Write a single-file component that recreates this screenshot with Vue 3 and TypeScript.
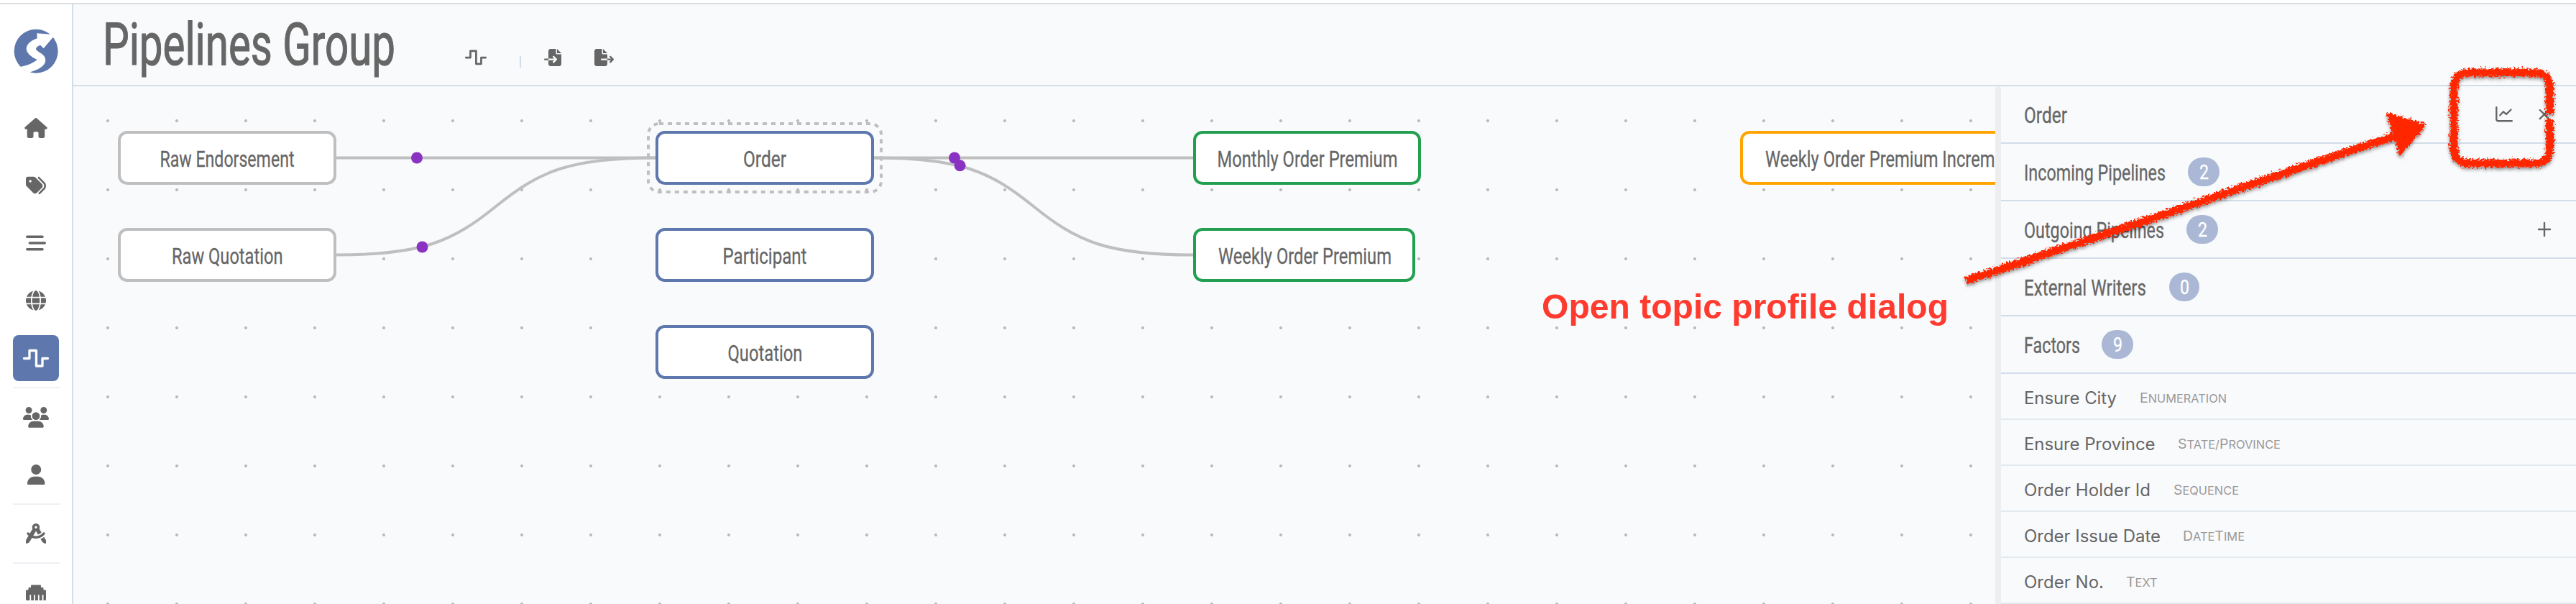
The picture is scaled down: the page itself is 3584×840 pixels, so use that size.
<script setup lang="ts">
interface NavItem {
  id: string
  viewBox: string
  width: number
  height: number
  path: string
  active?: boolean
  divider?: boolean
}

interface TopicNode {
  name: string
  kind: 'raw' | 'distinct' | 'aggregate' | 'time'
  x: number
  y: number
  width: number
  textX: number
  textWidth: number
}

interface Section {
  name: string
  width: number
  gap: number
  count?: number
  badge?: number
  tools?: 'topic' | 'add'
}

interface Factor {
  name: string
  width: number
  gap: number
  type: [string, boolean][]
  typeWidth: number
}

const pulsePath = 'M1.5 12.5H9V1.5H18.5V23H27V12.5H34.5'

const navItems: NavItem[] = [
  { id: 'home', viewBox: '0 0 576 512', width: 32, height: 28, path: 'M575.8 255.5c0 18-15 32.1-32 32.1h-32l.7 160.2c0 2.7-.2 5.4-.5 8.1V472c0 22.1-17.9 40-40 40H456c-1.1 0-2.2 0-3.3-.1c-1.4 .1-2.8 .1-4.2 .1H416 392c-22.1 0-40-17.9-40-40V448 384c0-17.7-14.3-32-32-32H256c-17.7 0-32 14.3-32 32v64 24c0 22.1-17.9 40-40 40H160 128.1c-1.5 0-3-.1-4.5-.2c-1.2 .1-2.4 .2-3.6 .2H104c-22.1 0-40-17.9-40-40V360c0-.9 0-1.9 .1-2.8V287.6H32c-18 0-32-14-32-32.1c0-9 3-17 10-24L266.4 8c7-7 15-8 22-8s15 2 21 7L564.8 231.5c8 7 12 15 11 24z' },
  { id: 'tags', viewBox: '0 0 512 512', width: 28, height: 28, path: 'M345 39.1L472.8 168.4c52.4 53 52.4 138.2 0 191.2L360.8 472.9c-9.3 9.4-24.5 9.5-33.9 .2s-9.5-24.5-.2-33.9L438.6 325.9c33.9-34.3 33.9-89.4 0-123.7L310.9 72.9c-9.3-9.4-9.2-24.6 .2-33.9s24.6-9.2 33.9 .2zM0 229.5V80C0 53.5 21.5 32 48 32H197.5c17 0 33.3 6.7 45.3 18.7l168 168c25 25 25 65.5 0 90.5L277.3 442.7c-25 25-65.5 25-90.5 0l-168-168C6.7 262.7 0 246.5 0 229.5zM144 144a32 32 0 1 0 -64 0 32 32 0 1 0 64 0z' },
  { id: 'list', viewBox: '0 0 28 28', width: 28, height: 28, path: 'M1.8 3.4H23a1.8 1.8 0 0 1 0 3.6H1.8a1.8 1.8 0 0 1 0-3.6ZM5.4 12.2H26.2a1.8 1.8 0 0 1 0 3.6H5.4a1.8 1.8 0 0 1 0-3.6ZM1.8 21H23a1.8 1.8 0 0 1 0 3.6H1.8a1.8 1.8 0 0 1 0-3.6Z' },
  { id: 'globe', viewBox: '0 0 512 512', width: 28, height: 28, path: 'M352 256c0 22.2-1.2 43.6-3.3 64H163.3c-2.2-20.4-3.3-41.8-3.3-64s1.2-43.6 3.3-64H348.7c2.2 20.4 3.3 41.8 3.3 64zm28.8-64H503.9c5.3 20.5 8.1 41.9 8.1 64s-2.8 43.5-8.1 64H380.8c2.1-20.6 3.2-42 3.2-64s-1.1-43.4-3.2-64zm112.6-32H376.7c-10-63.9-29.8-117.4-55.3-151.6c78.3 20.7 142 77.5 171.9 151.6zm-149.1 0H167.7c6.1-36.4 15.5-68.6 27-94.7c10.5-23.6 22.2-40.7 33.5-51.5C239.4 3.2 248.7 0 256 0s16.6 3.2 27.8 13.8c11.3 10.8 23 27.9 33.5 51.5c11.6 26 20.9 58.2 27 94.7zm-209 0H18.6C48.6 85.9 112.2 29.1 190.6 8.4C165.1 42.6 145.3 96.1 135.3 160zM8.1 192H131.2c-2.1 20.6-3.2 42-3.2 64s1.1 43.4 3.2 64H8.1C2.8 299.5 0 278.1 0 256s2.8-43.5 8.1-64zM194.7 446.6c-11.6-26-20.9-58.2-27-94.6H344.3c-6.1 36.4-15.5 68.6-27 94.6c-10.5 23.6-22.2 40.7-33.5 51.5C272.6 508.8 263.3 512 256 512s-16.6-3.2-27.8-13.8c-11.3-10.8-23-27.9-33.5-51.5zM135.3 352c10 63.9 29.8 117.4 55.3 151.6C112.2 482.9 48.6 426.1 18.6 352H135.3zm358.1 0c-30 74.1-93.6 130.9-171.9 151.6c25.5-34.2 45.2-87.7 55.3-151.6H493.4z' },
  { id: 'pipelines', viewBox: '0 0 36 25', width: 36, height: 25, path: pulsePath, active: true, divider: true },
  { id: 'groups', viewBox: '0 0 640 512', width: 36, height: 28.8, path: 'M144 0a80 80 0 1 1 0 160A80 80 0 1 1 144 0zM512 0a80 80 0 1 1 0 160A80 80 0 1 1 512 0zM0 298.7C0 239.8 47.8 192 106.7 192h42.7c15.9 0 31 3.5 44.6 9.7c-1.3 7.2-1.9 14.7-1.9 22.3c0 38.2 16.8 72.5 43.3 96c-.2 0-.4 0-.7 0H21.3C9.6 320 0 310.4 0 298.7zM405.3 320c-.2 0-.4 0-.7 0c26.6-23.5 43.3-57.8 43.3-96c0-7.6-.7-15-1.9-22.3c13.6-6.3 28.7-9.7 44.6-9.7h42.7C592.2 192 640 239.8 640 298.7c0 11.8-9.6 21.3-21.3 21.3H405.3zM224 224a96 96 0 1 1 192 0 96 96 0 1 1 -192 0zM128 485.3C128 411.7 187.7 352 261.3 352H378.7C452.3 352 512 411.7 512 485.3c0 14.7-11.9 26.7-26.7 26.7H154.7c-14.7 0-26.7-11.9-26.7-26.7z' },
  { id: 'user', viewBox: '0 0 448 512', width: 24.5, height: 28, path: 'M224 256a128 128 0 1 0 0-256 128 128 0 1 0 0 256zm-45.7 48C79.8 304 0 383.8 0 482.3 0 498.7 13.3 512 29.7 512H418.3c16.4 0 29.7-13.3 29.7-29.7C448 383.8 368.2 304 269.7 304H178.3z', divider: true },
  { id: 'drafting', viewBox: '0 0 512 512', width: 28, height: 28, path: 'M352 96c0 14.3-3.1 27.9-8.8 40.2L396 227.4c-23.7 25.3-54.2 44.1-88.5 53.6L256 192h0 0l-68 117.5c21.5 6.8 44.3 10.5 68.1 10.5c70.7 0 133.8-32.7 174.9-84c11.1-13.8 31.2-16 45-5s16 31.2 5 45C428.1 341.8 347 384 256 384c-35.4 0-69.4-6.4-100.7-18.1L98.7 463.7C94 471.8 87 478.4 78.6 482.6L23.2 510.3c-5 2.5-10.9 2.2-15.6-.7S0 501.5 0 496V440.6c0-8.4 2.2-16.7 6.5-24.1l60-103.7C53.7 301.6 41.8 289.3 31.2 276c-11.1-13.8-8.8-33.9 5-45s33.9-8.8 45 5c5.7 7.1 11.8 13.8 18.2 20.1l69.4-119.9c-5.6-12.2-8.8-25.8-8.8-40.2c0-53 43-96 96-96s96 43 96 96zm21 297.9c32.6-12.8 62.5-30.8 88.9-52.9l43.7 75.5c4.2 7.3 6.5 15.6 6.5 24.1V496c0 5.5-2.9 10.7-7.6 13.6s-10.6 3.2-15.6 .7l-55.4-27.7c-8.4-4.2-15.4-10.8-20.1-18.9L373 393.9zM256 128a32 32 0 1 0 0-64 32 32 0 1 0 0 64z', divider: true },
  { id: 'ethernet', viewBox: '0 0 28 22', width: 28, height: 22, path: 'M7 1.5Q7 .5 8 .5H20Q21 .5 21 1.5V4H23.5Q24.5 4 24.5 5V7.5H27Q28 7.5 28 8.5V20.5Q28 22 26.5 22H24.5V14.2H22.6V22H18.7V14.2H16.9V22H13V14.2H11.2V22H7.2V14.2H5.4V22H1.5Q0 22 0 20.5V8.5Q0 7.5 1 7.5H3.5V5Q3.5 4 4.5 4H7Z' },
]

const nodes: TopicNode[] = [
  { name: 'Raw Endorsement', kind: 'raw', x: 164, y: 182, width: 304, textX: 222.5, textWidth: 187 },
  { name: 'Raw Quotation', kind: 'raw', x: 164, y: 317, width: 304, textX: 239, textWidth: 154.5 },
  { name: 'Order', kind: 'distinct', x: 912, y: 182, width: 304, textX: 1034, textWidth: 60 },
  { name: 'Participant', kind: 'distinct', x: 912, y: 317, width: 304, textX: 1005.5, textWidth: 117 },
  { name: 'Quotation', kind: 'distinct', x: 912, y: 452, width: 304, textX: 1012.5, textWidth: 104 },
  { name: 'Monthly Order Premium', kind: 'aggregate', x: 1660, y: 182, width: 317, textX: 1693.5, textWidth: 251 },
  { name: 'Weekly Order Premium', kind: 'aggregate', x: 1660, y: 317, width: 309, textX: 1695, textWidth: 241 },
  { name: 'Weekly Order Premium Increm', kind: 'time', x: 2421, y: 182, width: 420, textX: 2456, textWidth: 319.5 },
]

const edges: string[] = [
  'M468 219.5H912',
  'M468 354.5C588 354.5 630 335.6 690 287S792 219.5 912 219.5',
  'M1216 219.5H1660',
  'M1216 219.5C1336 219.5 1378 238.4 1438 287S1540 354.5 1660 354.5',
]

const markers: [number, number][] = [
  [580, 219.5],
  [587.5, 343.5],
  [1328, 219.5],
  [1335.6, 230.3],
]

const sections: Section[] = [
  { name: 'Order', width: 60, gap: 0, tools: 'topic' },
  { name: 'Incoming Pipelines', width: 197, gap: 31, count: 2, badge: 44 },
  { name: 'Outgoing Pipelines', width: 195, gap: 31, count: 2, badge: 44, tools: 'add' },
  { name: 'External Writers', width: 170, gap: 32, count: 0, badge: 42 },
  { name: 'Factors', width: 78, gap: 30, count: 9, badge: 44 },
]

const factors: Factor[] = [
  { name: 'Ensure City', width: 129, gap: 32, type: [['E', true], ['numeration', false]], typeWidth: 121 },
  { name: 'Ensure Province', width: 182.5, gap: 31, type: [['S', true], ['tate/', false], ['P', true], ['rovince', false]], typeWidth: 143 },
  { name: 'Order Holder Id', width: 176, gap: 31.5, type: [['S', true], ['equence', false]], typeWidth: 91 },
  { name: 'Order Issue Date', width: 190, gap: 31, type: [['D', true], ['ate', false], ['T', true], ['ime', false]], typeWidth: 86 },
  { name: 'Order No.', width: 111, gap: 31, type: [['T', true], ['ext', false]], typeWidth: 43.5 },
]
</script>

<template>
  <div class="app">
    <aside class="sidebar">
      <div class="brand">
        <svg width="62" height="62" viewBox="55 118 186 186">
          <circle cx="148.5" cy="211.5" r="91.5" fill="#5e77ac" />
          <path d="M152 137L209 141L222 150L180 200L166 186Q148 193 148 203Q150 210 172 222Q188 233 188 250Q186 282 120 300L80 278Q130 268 153 247Q110 228 108 203Q108 175 153 158Z" fill="#fff" />
        </svg>
      </div>
      <nav class="nav">
        <template v-for="item in navItems" :key="item.id">
          <div class="nav-item">
            <span class="nav-button" :class="{ active: item.active }">
              <svg :width="item.width" :height="item.height" :viewBox="item.viewBox">
                <path :d="item.path" :class="item.active ? 'pulse' : 'solid'" />
              </svg>
            </span>
          </div>
          <div v-if="item.divider" class="divider"></div>
        </template>
      </nav>
    </aside>

    <main class="main">
      <header class="header">
        <svg class="title" width="407" height="84"><text class="face" x="0" y="70" textLength="407" lengthAdjust="spacingAndGlyphs">Pipelines Group</text></svg>
        <div class="tools">
          <svg width="30" height="22" viewBox="0 0 36 25" class="tool-pulse"><path :d="pulsePath" class="pulse" /></svg>
          <i class="tool-divider"></i>
          <svg width="24" height="24" viewBox="0 0 512 512" class="tool-import"><path class="solid" d="M128 64c0-35.3 28.7-64 64-64H352V128c0 17.7 14.3 32 32 32H512V448c0 35.3-28.7 64-64 64H192c-35.3 0-64-28.7-64-64V336H302.1l-39 39c-9.4 9.4-9.4 24.6 0 33.9s24.6 9.4 33.9 0l80-80c9.4-9.4 9.4-24.6 0-33.9l-80-80c-9.4-9.4-24.6-9.4-33.9 0s-9.4 24.6 0 33.9l39 39H128V64zm0 224v48H24c-13.3 0-24-10.7-24-24s10.7-24 24-24H128zM512 128H384V0L512 128z" /></svg>
          <svg width="27" height="24" viewBox="0 0 576 512" class="tool-export"><path class="solid" d="M0 64C0 28.7 28.7 0 64 0H224V128c0 17.7 14.3 32 32 32H384V288H216c-13.3 0-24 10.7-24 24s10.7 24 24 24H384V448c0 35.3-28.7 64-64 64H64c-35.3 0-64-28.7-64-64V64zM384 336V288H494.1l-39-39c-9.4-9.4-9.4-24.6 0-33.9s24.6-9.4 33.9 0l80 80c9.4 9.4 9.4 24.6 0 33.9l-80 80c-9.4 9.4-24.6 9.4-33.9 0s-9.4-24.6 0-33.9l39-39H384zm0-208H256V0L384 128z" /></svg>
        </div>
      </header>

      <div class="workspace">
        <section class="canvas">
          <svg class="diagram" width="2674" height="720" viewBox="102 120 2674 720">
            <path v-for="edge in edges" :key="edge" :d="edge" class="edge" />
            <rect x="902" y="172" width="324" height="95" rx="15" class="selection" />
            <circle v-for="[cx, cy] in markers" :key="cx" :cx="cx" :cy="cy" r="8" class="marker" />
            <g v-for="node in nodes" :key="node.name" :class="node.kind">
              <rect :x="node.x + 2" :y="node.y + 2" :width="node.width - 4" height="71" rx="11" class="box" />
              <text class="face" :x="node.textX" :y="node.y + 49.5" :textLength="node.textWidth" lengthAdjust="spacingAndGlyphs">{{ node.name }}</text>
            </g>
          </svg>
        </section>
        <div class="splitter"></div>
        <aside class="panel">
          <div v-for="section in sections" :key="section.name" class="section">
            <svg class="label" :width="section.width" height="40"><text class="face" x="0" y="32" :textLength="section.width" lengthAdjust="spacingAndGlyphs">{{ section.name }}</text></svg>
            <span v-if="section.badge" class="badge" :style="{ width: section.badge + 'px', marginLeft: section.gap + 'px' }">
              <svg width="13" height="40"><text class="face count" x="0" y="29.5" textLength="13" lengthAdjust="spacingAndGlyphs">{{ section.count }}</text></svg>
            </span>
            <span v-if="section.tools === 'topic'" class="actions">
              <svg width="24" height="22" viewBox="0 0 24 22"><path d="M1.3 1.2V17.5Q1.3 20.2 4 20.2H22.8M6.3 12.3L11 7.3L15 10.9L21.5 4.5" class="line" /></svg>
              <svg width="18" height="18" viewBox="0 0 18 18"><path d="M2.8 3L15 15.2M15 3L2.8 15.2" class="line" /></svg>
            </span>
            <span v-if="section.tools === 'add'" class="actions">
              <svg width="18" height="20" viewBox="0 0 18 20"><path d="M9 1V19M1 10H17" class="line" /></svg>
            </span>
          </div>
          <div v-for="factor in factors" :key="factor.name" class="factor">
            <svg :width="factor.width" height="40"><text class="factor-name" x="0" y="30.7" :textLength="factor.width">{{ factor.name }}</text></svg>
            <svg class="factor-type" :style="{ marginLeft: factor.gap + 'px' }" :width="factor.typeWidth" height="40"><text x="0" y="29" :textLength="factor.typeWidth" lengthAdjust="spacingAndGlyphs"><tspan v-for="([part, capital], index) in factor.type" :key="index" :class="capital ? 'capital' : 'small'">{{ part }}</tspan></text></svg>
          </div>
        </aside>
      </div>
    </main>

    <svg class="annotation" width="3584" height="840">
      <defs>
        <filter id="crayon" filterUnits="userSpaceOnUse" x="2700" y="70" width="884" height="350">
          <feTurbulence type="fractalNoise" baseFrequency="0.35" numOctaves="3" seed="4" result="noise" />
          <feDisplacementMap in="SourceGraphic" in2="noise" scale="11" xChannelSelector="R" yChannelSelector="G" result="rough" />
          <feDropShadow in="rough" dx="0" dy="3" stdDeviation="2" flood-color="#000" flood-opacity="0.4" />
        </filter>
      </defs>
      <g filter="url(#crayon)">
        <path d="M2735 390L2760 382L3000 302L3180 240L3332 189" class="stroke" />
        <path d="M3323 159L3373 174L3339.5 214Z" class="head" />
        <path d="M3547.5 159V122Q3547.5 101 3526 101H3436Q3414 101 3414 124V205Q3414 227 3436 227H3526Q3547.5 227 3547.5 205V166" class="stroke" />
      </g>
      <text x="2145" y="443" textLength="566" lengthAdjust="spacingAndGlyphs" class="caption">Open topic profile dialog</text>
    </svg>
  </div>
</template>

<style>
body {
  margin: 0;
  overflow: hidden;
}
</style>

<style scoped>
.app {
  position: relative;
  box-sizing: border-box;
  display: flex;
  width: 3584px;
  height: 840px;
  padding-top: 4px;
  overflow: hidden;
  background: #fff;
  color: #666;
  font-family: Inter, "Liberation Sans", sans-serif;
}
svg {
  display: block;
  flex: none;
  overflow: visible;
}
.face {
  font-family: Roboto, "Liberation Sans Narrow", "Liberation Sans", sans-serif;
  font-size: 32px;
  font-weight: 400;
  fill: #666;
  stroke: #666;
  stroke-width: 0.3;
}
.solid {
  fill: #666;
}
.pulse {
  fill: none;
  stroke: #666;
  stroke-width: 3.3;
  stroke-linecap: round;
  stroke-linejoin: round;
}
.sidebar {
  box-sizing: border-box;
  width: 102px;
  height: 836px;
  flex: none;
  border-top: 2px solid #ddd;
  border-right: 2px solid #d2dde9;
  overflow: hidden;
}
.brand {
  box-sizing: border-box;
  height: 132px;
  padding: 33.5px 0 0 18.5px;
}
.nav {
  display: flex;
  flex-direction: column;
}
.nav-item {
  display: flex;
  flex: none;
  align-items: center;
  justify-content: center;
  height: 80px;
}
.nav-button {
  display: flex;
  align-items: center;
  justify-content: center;
  width: 64px;
  height: 64px;
  border-radius: 8px;
}
.active {
  background: #5e77ac;
}
.active .pulse {
  stroke: #fff;
}
.divider {
  height: 2px;
  flex: none;
  margin: 0 16px 0 18px;
  background: #f0f0f5;
}
.main {
  display: flex;
  flex: 1;
  flex-direction: column;
  min-width: 0;
  background: #f9fafc;
}
.header {
  box-sizing: border-box;
  display: flex;
  align-items: flex-start;
  height: 116px;
  flex: none;
  padding: 14px 0 0 41px;
  border-top: 2px solid #ddd;
  border-bottom: 2px solid #d2dde9;
}
.title .face {
  font-size: 81px;
  stroke-width: 1.2;
}
.tools {
  display: flex;
  align-items: flex-start;
  padding-top: 48px;
  margin-left: 97px;
}
.tool-pulse {
  margin-top: 1px;
}
.tool-divider {
  width: 2px;
  height: 16px;
  margin: 10px 32px 0 46px;
  background: #d2dde9;
}
.tool-export {
  margin-left: 46px;
}
.workspace {
  display: flex;
  flex: 1;
  min-height: 0;
}
.canvas {
  width: 2674px;
  flex: none;
  overflow: hidden;
  background-image: radial-gradient(circle at center, #bbb 1.8px, transparent 2.3px);
  background-size: 96px 96px;
}
.edge {
  fill: none;
  stroke: #bfbfbf;
  stroke-width: 4;
}
.selection {
  fill: none;
  stroke: #bfbfbf;
  stroke-width: 4;
  stroke-dasharray: 6 6;
}
.marker {
  fill: #8a33c2;
}
.box {
  fill: #fff;
  stroke-width: 4;
}
.raw .box {
  stroke: #bfbfbf;
}
.distinct .box {
  stroke: #5e77ac;
}
.aggregate .box {
  stroke: #22a050;
}
.time .box {
  stroke: #ffa400;
}
.splitter {
  width: 8px;
  flex: none;
  border-radius: 4px 4px 0 0;
  background: #eeeef0;
}
.panel {
  flex: 1;
  min-width: 0;
  overflow: hidden;
}
.section {
  box-sizing: border-box;
  display: flex;
  align-items: center;
  height: 80px;
  padding: 0 35px 2px 32px;
  border-bottom: 2px solid #d2dde9;
}
.label {
  margin-top: 2px;
}
.badge {
  display: flex;
  justify-content: center;
  height: 40px;
  margin-top: 2px;
  border-radius: 20px;
  background: #abb8d5;
}
.count {
  font-size: 27px;
  fill: #fff;
  stroke: #fff;
}
.actions {
  display: flex;
  align-items: center;
  gap: 35px;
  margin-top: 2px;
  margin-left: auto;
}
.line {
  fill: none;
  stroke: #666;
  stroke-width: 2.4;
  stroke-linecap: round;
  stroke-linejoin: round;
}
.factor {
  box-sizing: border-box;
  display: flex;
  align-items: center;
  height: 64px;
  padding-left: 32px;
  border-bottom: 2px solid #e2eaf0;
}
.factor-name {
  font-size: 24px;
  fill: #666;
}
.factor-type {
  fill: #999;
  text-transform: uppercase;
}
.capital {
  font-size: 19px;
}
.small {
  font-size: 16px;
}
.annotation {
  position: absolute;
  top: 0;
  left: 0;
  pointer-events: none;
}
.stroke {
  fill: none;
  stroke: #ff2600;
  stroke-width: 11;
}
.head {
  fill: #ff2600;
  stroke: #ff2600;
  stroke-width: 4;
  stroke-linejoin: round;
}
.caption {
  font-family: "Liberation Sans", Arial, sans-serif;
  font-size: 49px;
  font-weight: 700;
  fill: #ff3b30;
}
</style>
